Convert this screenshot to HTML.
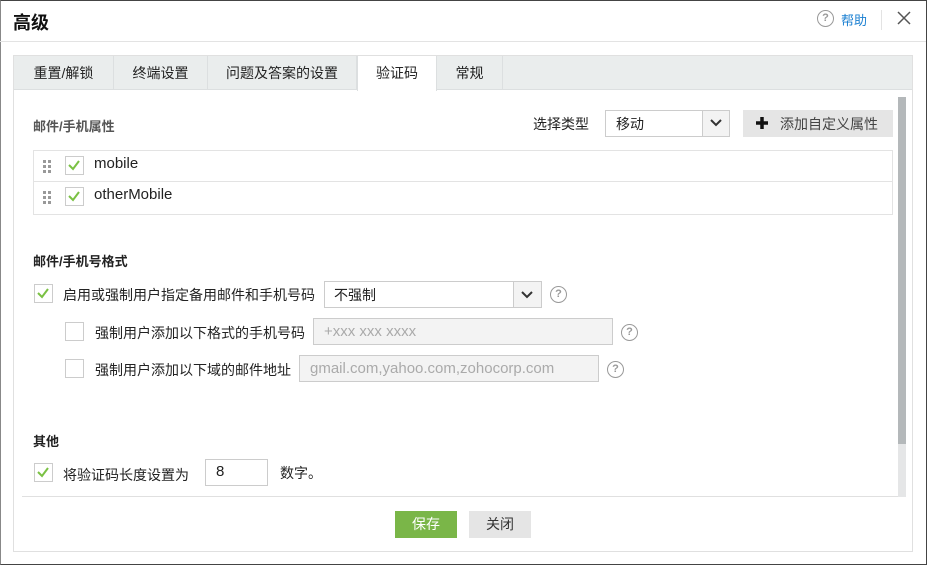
<!DOCTYPE html>
<html><head><meta charset="utf-8"><style>
*{box-sizing:border-box;margin:0;padding:0}
body{width:927px;height:565px;background:#fff;font-family:"Liberation Sans","Noto Sans CJK SC",sans-serif;font-size:14px;color:#222;position:relative;overflow:hidden}
.a{position:absolute}
.frame{left:0;top:0;width:927px;height:565px;border:1px solid #444;border-left-color:#888}
.cb{position:absolute;width:19px;height:19px;border:1.5px solid #ccc;background:#fff}
.cb svg{position:absolute;left:1px;top:1px}
.help{position:absolute;width:17px;height:17px;border:1.5px solid #999;border-radius:50%;color:#999;font-size:11px;text-align:center;line-height:14px;font-weight:bold}
.inp{position:absolute;border:1px solid #ccc;background:#f3f3f3;color:#aaa;font-size:15px;padding-left:10px}
.tab{position:absolute;top:56px;height:34px;line-height:34px;text-align:center;font-size:14px;border-right:1px solid #dcdfe0}
.dots{position:absolute;width:8px;height:12px}
.dots i{position:absolute;width:3px;height:3px;background:#999}
</style></head><body>
<div class="a frame"></div>
<div class="a" style="left:13px;top:9px;font-size:18px;font-weight:bold;color:#111">高级</div>
<div class="help" style="left:817px;top:10px">?</div>
<div class="a" style="left:841px;top:10px;color:#1a7fd1;font-size:13px">帮助</div>
<div class="a" style="left:881px;top:10px;width:1px;height:20px;background:#e3e3e3"></div>
<svg class="a" style="left:897px;top:11px" width="14" height="14"><path d="M1 1L13 13M13 1L1 13" stroke="#555" stroke-width="1.5"/></svg>
<div class="a" style="left:0;top:41px;width:926px;height:1px;background:#e3e3e3"></div>

<div class="a" style="left:13px;top:55px;width:900px;height:497px;border:1px solid #e0e0e0"></div>
<div class="a" style="left:14px;top:56px;width:898px;height:34px;background:#eaeded;border-bottom:1px solid #dcdfe0"></div>
<div class="tab" style="left:14px;width:100px">重置/解锁</div>
<div class="tab" style="left:114px;width:94px">终端设置</div>
<div class="tab" style="left:208px;width:149px">问题及答案的设置</div>
<div class="tab" style="left:357px;width:80px;background:#fff;height:35px;border-left:1px solid #dcdfe0">验证码</div>
<div class="tab" style="left:437px;width:66px">常规</div>

<div class="a" style="left:898px;top:97px;width:8px;height:400px;background:#e5e6e7"></div>
<div class="a" style="left:898px;top:97px;width:8px;height:347px;background:#b4b8ba"></div>
<div class="a" style="left:22px;top:496px;width:876px;height:1px;background:#e0e0e0"></div>

<div class="a" style="left:33px;top:116px;font-weight:bold;color:#555;font-size:13px">邮件/手机属性</div>
<div class="a" style="left:533px;top:114px">选择类型</div>
<div class="a" style="left:605px;top:110px;width:125px;height:27px;border:1px solid #ccc;background:#fff"></div>
<div class="a" style="left:616px;top:114px">移动</div>
<div class="a" style="left:702px;top:111px;width:27px;height:25px;background:#f3f3f3;border-left:1px solid #ccc"></div>
<svg class="a" style="left:710px;top:119px" width="12" height="8"><path d="M1 1L6 6L11 1" stroke="#333" stroke-width="2" fill="none"/></svg>
<div class="a" style="left:743px;top:110px;width:150px;height:27px;background:#e5e5e5"></div>
<svg class="a" style="left:756px;top:117px" width="12" height="12"><path d="M6 0V12M0 6H12" stroke="#111" stroke-width="3.5"/></svg>
<div class="a" style="left:780px;top:114px;color:#444">添加自定义属性</div>

<div class="a" style="left:33px;top:150px;width:860px;height:65px;border:1px solid #e3e3e3"></div>
<div class="a" style="left:34px;top:181px;width:858px;height:1px;background:#e3e3e3"></div>
<div class="dots" style="left:43px;top:160px"><i style="left:0;top:0"></i><i style="left:5px;top:0"></i><i style="left:0;top:5px"></i><i style="left:5px;top:5px"></i><i style="left:0;top:10px"></i><i style="left:5px;top:10px"></i></div>
<div class="dots" style="left:43px;top:191px"><i style="left:0;top:0"></i><i style="left:5px;top:0"></i><i style="left:0;top:5px"></i><i style="left:5px;top:5px"></i><i style="left:0;top:10px"></i><i style="left:5px;top:10px"></i></div>
<div class="cb" style="left:65px;top:156px"><svg width="14" height="14"><path d="M2 7L6 11L12 3" stroke="#7ac143" stroke-width="2" fill="none"/></svg></div>
<div class="cb" style="left:65px;top:187px"><svg width="14" height="14"><path d="M2 7L6 11L12 3" stroke="#7ac143" stroke-width="2" fill="none"/></svg></div>
<div class="a" style="left:94px;top:155px;font-size:15px">mobile</div>
<div class="a" style="left:94px;top:186px;font-size:15px">otherMobile</div>

<div class="a" style="left:33px;top:251px;font-weight:bold;font-size:13px">邮件/手机号格式</div>
<div class="cb" style="left:34px;top:284px"><svg width="14" height="14"><path d="M2 7L6 11L12 3" stroke="#7ac143" stroke-width="2" fill="none"/></svg></div>
<div class="a" style="left:63px;top:285px">启用或强制用户指定备用邮件和手机号码</div>
<div class="a" style="left:324px;top:281px;width:218px;height:27px;border:1px solid #ccc;background:#fff"></div>
<div class="a" style="left:334px;top:285px">不强制</div>
<div class="a" style="left:513px;top:282px;width:28px;height:25px;background:#f3f3f3;border-left:1px solid #ccc"></div>
<svg class="a" style="left:521px;top:291px" width="12" height="8"><path d="M1 1L6 6L11 1" stroke="#333" stroke-width="2" fill="none"/></svg>
<div class="help" style="left:550px;top:286px">?</div>

<div class="cb" style="left:65px;top:322px"></div>
<div class="a" style="left:95px;top:323px">强制用户添加以下格式的手机号码</div>
<div class="inp" style="left:313px;top:318px;width:300px;height:27px;line-height:25px">+xxx xxx xxxx</div>
<div class="help" style="left:621px;top:324px">?</div>
<div class="cb" style="left:65px;top:359px"></div>
<div class="a" style="left:95px;top:360px">强制用户添加以下域的邮件地址</div>
<div class="inp" style="left:299px;top:355px;width:300px;height:27px;line-height:25px">gmail.com,yahoo.com,zohocorp.com</div>
<div class="help" style="left:607px;top:361px">?</div>

<div class="a" style="left:33px;top:431px;font-weight:bold;font-size:13px">其他</div>
<div class="cb" style="left:34px;top:463px"><svg width="14" height="14"><path d="M2 7L6 11L12 3" stroke="#7ac143" stroke-width="2" fill="none"/></svg></div>
<div class="a" style="left:63px;top:465px">将验证码长度设置为</div>
<div class="a" style="left:205px;top:459px;width:63px;height:27px;border:1px solid #ccc;padding-left:10px;line-height:24px;font-size:15px">8</div>
<div class="a" style="left:280px;top:463px">数字。</div>

<div class="a" style="left:395px;top:511px;width:62px;height:27px;background:#7ab648;color:#fff;text-align:center;line-height:27px">保存</div>
<div class="a" style="left:469px;top:511px;width:62px;height:27px;background:#e5e5e5;color:#333;text-align:center;line-height:27px">关闭</div>
</body></html>
